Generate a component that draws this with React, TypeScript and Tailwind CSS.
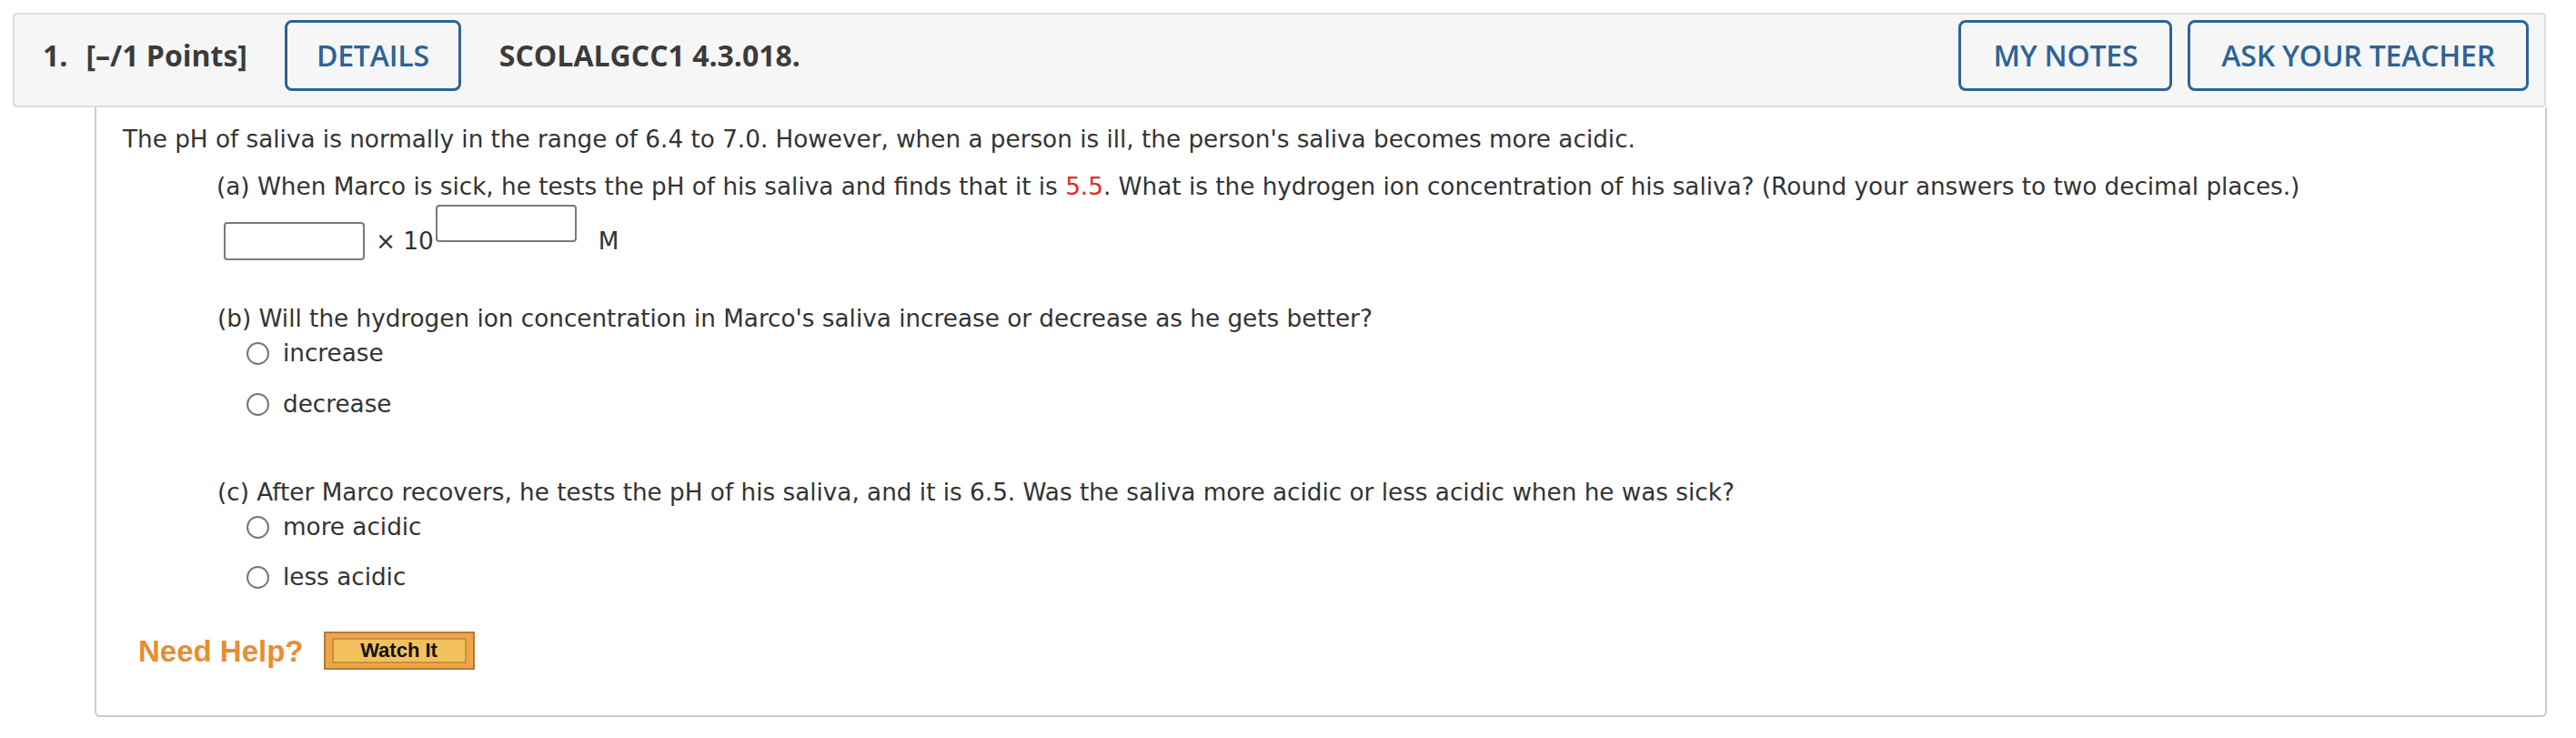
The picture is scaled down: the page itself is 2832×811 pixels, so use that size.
import React from 'react';

const headerFont = { fontFamily: '"Open Sans", "Liberation Sans", sans-serif' };
const bodyFont = { fontFamily: 'Verdana, "DejaVu Sans", sans-serif' };
const helpFont = { fontFamily: '"Liberation Sans", Arial, sans-serif' };

const OutlineButton: React.FC<{ label: string; className?: string }> = ({ label, className = '' }) => (
  <button
    className={`h-[78px] border-[3px] border-[#2d6397] rounded-[8px] text-[#2d6397] text-[32px] font-semibold leading-none tracking-[-0.2px] bg-transparent ${className}`}
  >
    {label}
  </button>
);

const Radio: React.FC<{ label: string; className?: string }> = ({ label, className = '' }) => (
  <label className={`flex items-center h-[30px] ml-[136px] ${className}`}>
    <span className="w-[25px] h-[25px] rounded-full border-2 border-[#767676] bg-white shrink-0" />
    <span className="ml-[15px] leading-[30px]">{label}</span>
  </label>
);

export default function App() {
  return (
    <div className="w-[2832px] min-h-[811px] bg-white pt-[14px] pl-[14px] pr-[33px]">
      {/* question header */}
      <div
        style={headerFont}
        className="h-[104px] flex items-center bg-[#f6f6f6] border-2 border-[#dddddd] rounded-[4px] pl-[31px] pr-[17px] pb-[10px] text-[#3b3b3b]"
      >
        <span className="text-[32px] font-bold">1.</span>
        <span className="ml-[20px] text-[32px] font-bold">[–/1 Points]</span>
        <OutlineButton label="DETAILS" className="ml-[41px] px-[32px]" />
        <span className="ml-[42px] text-[32px] font-bold">SCOLALGCC1 4.3.018.</span>
        <div className="ml-auto flex gap-[17px]">
          <OutlineButton label="MY NOTES" className="px-[35px]" />
          <OutlineButton label="ASK YOUR TEACHER" className="px-[34px]" />
        </div>
      </div>

      {/* question body */}
      <div
        style={bodyFont}
        className="ml-[90px] -mr-[1px] border-2 border-t-0 border-[#cccccc] rounded-b-[6px] pt-[20px] pl-[29px] pb-[50px] text-[26.25px] text-[#333333]"
      >
        <p className="leading-[30px]">
          The pH of saliva is normally in the range of 6.4 to 7.0. However, when a person is ill, the person's saliva becomes more acidic.
        </p>

        <p className="mt-[22px] ml-[103px] leading-[30px]">
          (a) When Marco is sick, he tests the pH of his saliva and finds that it is <span className="text-[#e32b23]">5.5</span>. What is the hydrogen ion concentration of his saliva? (Round your answers to two decimal places.)
        </p>

        <div className="mt-[5px] ml-[111px] flex items-start h-[61px]">
          <input
            type="text"
            className="mt-[19px] w-[155px] h-[42px] border-2 border-[#7a7a7a] rounded-[4px] bg-white outline-none"
          />
          <span className="mt-[25px] ml-[12px] leading-[30px]">× 10</span>
          <input
            type="text"
            className="ml-[2px] w-[155px] h-[41px] border-2 border-[#7a7a7a] rounded-[4px] bg-white outline-none"
          />
          <span className="mt-[25px] ml-[24px] leading-[30px]">M</span>
        </div>

        <p className="mt-[49px] ml-[104px] leading-[30px]">
          (b) Will the hydrogen ion concentration in Marco's saliva increase or decrease as he gets better?
        </p>
        <Radio label="increase" className="mt-[8px]" />
        <Radio label="decrease" className="mt-[26px]" />

        <p className="mt-[67px] ml-[104px] leading-[30px]">
          (c) After Marco recovers, he tests the pH of his saliva, and it is 6.5. Was the saliva more acidic or less acidic when he was sick?
        </p>
        <Radio label="more acidic" className="mt-[8px]" />
        <Radio label="less acidic" className="mt-[25px]" />

        <div className="mt-[45px] ml-[17px] flex items-center h-[42px]" style={helpFont}>
          <span className="text-[33px] font-bold text-[#e68d35] leading-none">Need Help?</span>
          <button className="ml-[22px] w-[166px] h-[42px] border-2 border-[#b07a3a] bg-[#eea449] p-[5px_7px]">
            <span className="flex items-center justify-center w-full h-full bg-[#f3c15b] border-2 border-[#c8913f] text-[22px] font-bold text-[#111111] leading-none">
              Watch It
            </span>
          </button>
        </div>
      </div>
    </div>
  );
}
